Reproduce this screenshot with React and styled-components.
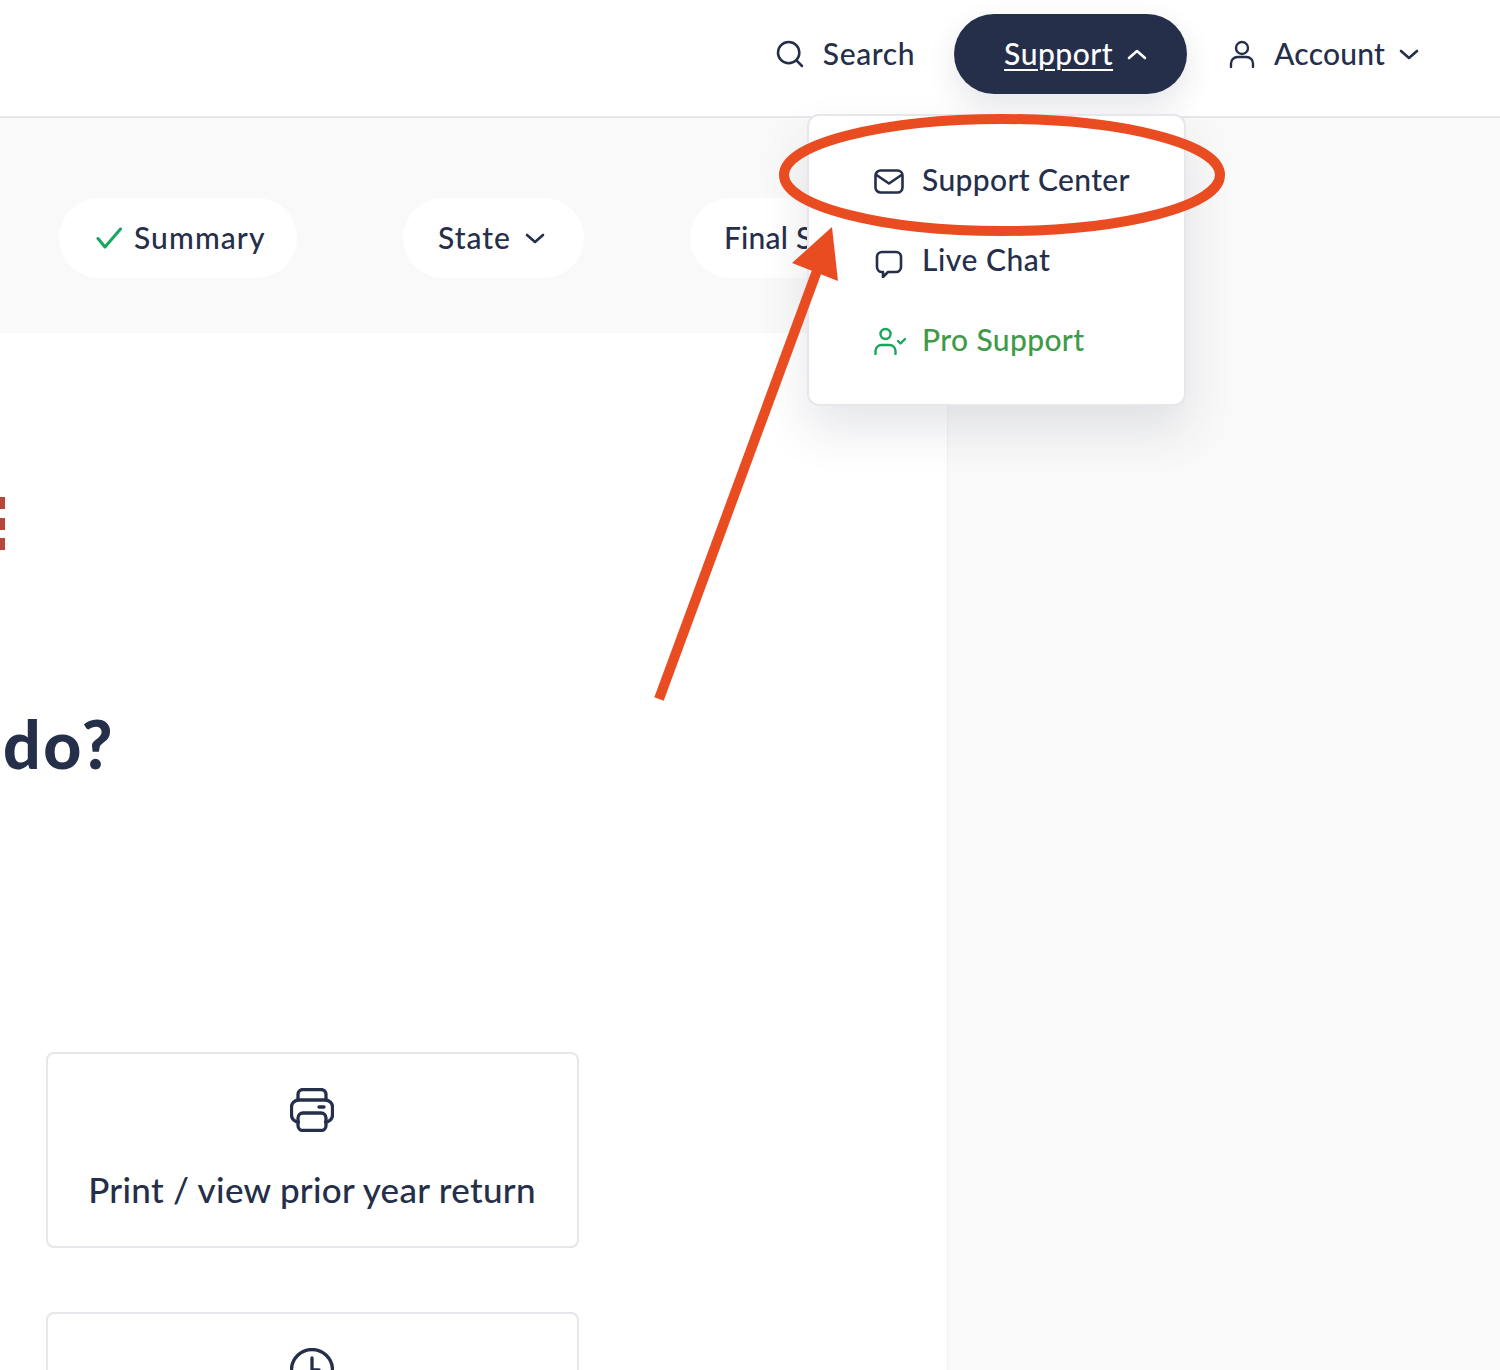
import React from "react";
import styled, { createGlobalStyle } from "styled-components";
import { Search } from "lucide-react";

const ink = "#262f4a";
const line = "#e6e6eb";
const panel = "#f9f9f9";
const orange = "#ea4c22";

const GlobalStyle = createGlobalStyle`
  html, body { margin: 0; padding: 0; background: #fff; }
  body { font-family: "Lato", "Noto Sans", sans-serif; color: ${ink}; }
  * { box-sizing: border-box; }
`;

const Page = styled.div`
  position: relative;
  width: 1500px;
  height: 1370px;
  overflow: hidden;
  display: flex;
  flex-direction: column;
`;

const Header = styled.header`
  position: relative;
  z-index: 2;
  height: 118px;
  flex: none;
  border-bottom: 2px solid ${line};
  padding: 14px 81px 0 0;
  display: flex;
  justify-content: flex-end;
  align-items: flex-start;
  background: #fff;
`;

const Label = styled.span`
  font-size: 30px;
  font-weight: 500;
  letter-spacing: ${(props) => props.$track ?? 0.2}px;
  margin-bottom: ${(props) => props.$lift ?? 2}px;
`;

const NavLink = styled.div`
  height: 80px;
  display: flex;
  align-items: center;
  margin-left: ${(props) => props.$left || 0}px;
`;

const IconSlot = styled.span`
  display: flex;
  align-items: center;
  margin-right: ${(props) => props.$right}px;
`;

const ChevronSlot = styled.span`
  display: flex;
  align-items: center;
  margin-left: ${(props) => props.$left}px;
`;

const SupportWrap = styled.div`
  position: relative;
  margin-left: 39px;
`;

const SupportButton = styled.div`
  width: 233px;
  height: 80px;
  padding-left: 50px;
  border-radius: 40px;
  background: ${ink};
  color: #fff;
  display: flex;
  align-items: center;
  box-shadow: 0 12px 30px rgba(38, 47, 74, 0.12);

  ${Label} {
    text-decoration: underline;
    text-underline-offset: 4px;
    text-decoration-thickness: 2px;
  }
`;

const Dropdown = styled.div`
  position: absolute;
  top: 100px;
  left: -147px;
  width: 379px;
  height: 292px;
  padding-top: 25px;
  background: #fff;
  border: 2px solid ${line};
  border-radius: 12px;
  box-shadow: 0 24px 48px rgba(38, 47, 74, 0.12);
`;

const MenuItem = styled.div`
  height: 80px;
  padding-left: 65px;
  display: flex;
  align-items: center;
  color: ${(props) => (props.$pro ? "#3f9a4a" : ink)};
`;

const MenuIcon = styled.span`
  width: 48px;
  display: flex;
  align-items: center;
`;

const Workspace = styled.div`
  flex: 1;
  display: flex;
  min-height: 0;
`;

const MainColumn = styled.main`
  width: 947px;
  flex: none;
  display: flex;
  flex-direction: column;
`;

const Aside = styled.aside`
  flex: 1;
  background: ${panel};
  border-left: 1px solid #f1f1f3;
`;

const StepBar = styled.nav`
  height: 215px;
  flex: none;
  background: ${panel};
  padding: 80px 0 0 59px;
  display: flex;
  align-items: flex-start;
  gap: 106px;
`;

const StepPill = styled.div`
  width: ${(props) => props.$width}px;
  height: 80px;
  flex: none;
  padding-left: ${(props) => props.$left}px;
  border-radius: 40px;
  background: #fff;
  display: flex;
  align-items: center;
`;

const ErrorMark = styled.div`
  margin-top: 164px;
  width: 5px;
  height: 53px;
  flex: none;
  display: flex;
  flex-direction: column;
  justify-content: space-between;
`;

const ErrorBar = styled.i`
  display: block;
  height: 12px;
  background: #b5483a;
`;

const Title = styled.h1`
  margin: 158px 0 0 3px;
  flex: none;
  font-size: 66px;
  line-height: 72px;
  font-weight: 900;
  letter-spacing: 2.5px;
`;

const Cards = styled.div`
  margin: 272px 0 0 46px;
  width: 533px;
  flex: none;
  display: flex;
  flex-direction: column;
  gap: 64px;
`;

const Card = styled.div`
  height: 196px;
  flex: none;
  border: 2px solid ${line};
  border-radius: 8px;
  padding: 34px 1px 0 0;
  display: flex;
  flex-direction: column;
  align-items: center;
  gap: 36px;
`;

const CardText = styled.span`
  font-size: 35px;
  font-weight: 500;
  letter-spacing: 0.3px;
`;

const Annotation = styled.svg`
  position: absolute;
  inset: 0;
  z-index: 3;
  pointer-events: none;
`;

function Chevron({ up, width = 20 }) {
  const h = Math.round(width * 0.55);
  const d = up ? `M2 ${h - 2}L${width / 2} 2L${width - 2} ${h - 2}` : `M2 2L${width / 2} ${h - 2}L${width - 2} 2`;
  return (
    <svg width={width} height={h} viewBox={`0 0 ${width} ${h}`} fill="none" stroke="currentColor" strokeWidth="2.6" strokeLinecap="round" strokeLinejoin="round">
      <path d={d} />
    </svg>
  );
}

function AccountIcon() {
  return (
    <svg width="28" height="28" viewBox="0 0 28 28" fill="none" stroke={ink} strokeWidth="2.4" strokeLinecap="round">
      <circle cx="14" cy="8" r="6" />
      <path d="M3 27v-3.5A6.5 6.5 0 0 1 9.5 17h9a6.5 6.5 0 0 1 6.5 6.5V27" />
    </svg>
  );
}

function MailIcon() {
  return (
    <svg width="30" height="25" viewBox="0 0 30 25" fill="none" stroke={ink} strokeWidth="2.6" strokeLinecap="round" strokeLinejoin="round">
      <rect x="1.500" y="1.500" width="27" height="22" rx="5" />
      <path d="M2.500 6l12.500 8.500L27.500 6" />
    </svg>
  );
}

function ChatIcon() {
  return (
    <svg width="30" height="34" viewBox="0 0 30 34" fill="none" stroke={ink} strokeWidth="2.6" strokeLinecap="round" strokeLinejoin="round">
      <path d="M3 13a5 5 0 0 1 5-5h14a5 5 0 0 1 5 5v10a5 5 0 0 1-5 5H14l-5 5v-5H8a5 5 0 0 1-5-5Z" />
    </svg>
  );
}

function ProIcon() {
  return (
    <svg width="34" height="28" viewBox="0 0 34 28" fill="none" stroke="#16a75c" strokeWidth="2.4" strokeLinecap="round" strokeLinejoin="round">
      <circle cx="11.500" cy="7" r="5" />
      <path d="M1.500 27v-3a6 6 0 0 1 6-6h8a6 6 0 0 1 6 6v3" />
      <path d="M24 14l2.500 2.500 4.500-4.500" />
    </svg>
  );
}

function CheckIcon() {
  return (
    <svg width="28" height="22" viewBox="0 0 28 22" fill="none" stroke="#16a75c" strokeWidth="3" strokeLinecap="round" strokeLinejoin="round">
      <path d="M3 11.500l7 8.500L25.500 2" />
    </svg>
  );
}

function PrinterIcon() {
  return (
    <svg width="44" height="44" viewBox="0 0 44 44" fill="none" stroke={ink} strokeWidth="3.300" strokeLinecap="round" strokeLinejoin="round">
      <path d="M8 12V6.500a5 5 0 0 1 5-5h18a5 5 0 0 1 5 5V12" />
      <path d="M8 34H8.500a7 7 0 0 1-7-7v-8a7 7 0 0 1 7-7h27a7 7 0 0 1 7 7v8a7 7 0 0 1-7 7H36" />
      <rect x="8" y="25" width="28" height="17.500" rx="5" />
      <path d="M29 19h5" />
    </svg>
  );
}

function ClockIcon() {
  return (
    <svg width="44" height="44" viewBox="0 0 44 44" fill="none" stroke={ink} strokeWidth="3.300" strokeLinecap="round" strokeLinejoin="round">
      <circle cx="22" cy="22" r="20.500" />
      <path d="M22 10v12h7" />
    </svg>
  );
}

export default function App() {
  return (
    <Page>
      <GlobalStyle />
      <Header>
        <NavLink>
          <IconSlot $right={17}>
            <Search size={32} strokeWidth={1.9} />
          </IconSlot>
          <Label $track={0.6}>Search</Label>
        </NavLink>
        <SupportWrap>
          <SupportButton>
            <Label $track={0.5}>Support</Label>
            <ChevronSlot $left={14}>
              <Chevron up />
            </ChevronSlot>
          </SupportButton>
          <Dropdown>
            <MenuItem>
              <MenuIcon><MailIcon /></MenuIcon>
              <Label $lift={5} $track={0.35}>Support Center</Label>
            </MenuItem>
            <MenuItem>
              <MenuIcon><ChatIcon /></MenuIcon>
              <Label $lift={5} $track={0.5}>Live Chat</Label>
            </MenuItem>
            <MenuItem $pro>
              <MenuIcon><ProIcon /></MenuIcon>
              <Label $lift={5} $track={0.35}>Pro Support</Label>
            </MenuItem>
          </Dropdown>
        </SupportWrap>
        <NavLink $left={41}>
          <IconSlot $right={18}>
            <AccountIcon />
          </IconSlot>
          <Label>Account</Label>
          <ChevronSlot $left={14}>
            <Chevron />
          </ChevronSlot>
        </NavLink>
      </Header>
      <Workspace>
        <MainColumn>
          <StepBar>
            <StepPill $width={238} $left={36}>
              <IconSlot $right={11}>
                <CheckIcon />
              </IconSlot>
              <Label $track={1.1}>Summary</Label>
            </StepPill>
            <StepPill $width={181} $left={35}>
              <Label $track={1}>State</Label>
              <ChevronSlot $left={14}>
                <Chevron />
              </ChevronSlot>
            </StepPill>
            <StepPill $width={260} $left={34}>
              <Label>Final Steps</Label>
            </StepPill>
          </StepBar>
          <ErrorMark>
            <ErrorBar />
            <ErrorBar />
            <ErrorBar />
          </ErrorMark>
          <Title>do?</Title>
          <Cards>
            <Card>
              <PrinterIcon />
              <CardText>Print / view prior year return</CardText>
            </Card>
            <Card>
              <ClockIcon />
            </Card>
          </Cards>
        </MainColumn>
        <Aside />
      </Workspace>
      <Annotation width="1500" height="1370" viewBox="0 0 1500 1370">
        <ellipse cx="1002" cy="175" rx="218" ry="56" fill="none" stroke={orange} strokeWidth="10" />
        <path d="M659 699 L818 268" fill="none" stroke={orange} strokeWidth="10" />
        <path d="M832 227 L792 263 L838 281 Z" fill={orange} />
      </Annotation>
    </Page>
  );
}
